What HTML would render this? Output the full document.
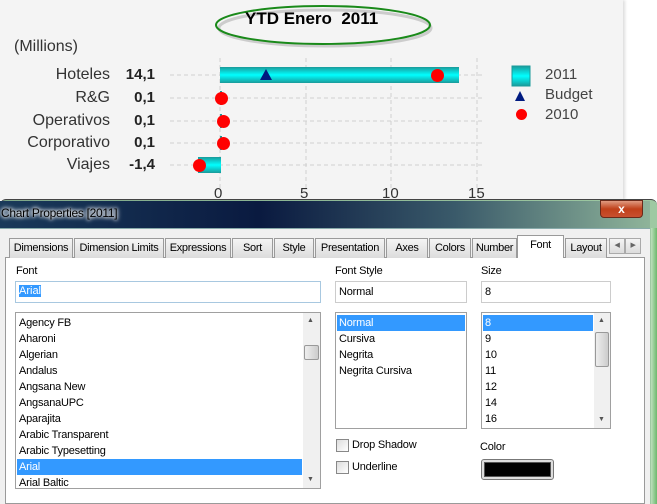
<!DOCTYPE html>
<html><head><style>
*{margin:0;padding:0;box-sizing:border-box}
body{width:657px;height:504px;overflow:hidden;background:#fff;font-family:"Liberation Sans",sans-serif;position:relative}
.a{position:absolute}
.lbl{font-size:16px;color:#333;text-align:right;width:110px;left:0}
.val{font-size:15px;font-weight:bold;color:#222;text-align:right;width:40px;left:115px}
.dot{width:13px;height:13px;border-radius:50%;background:#f00}
.tab{position:absolute;top:238px;height:20px;border:1px solid #9a9a9a;border-bottom:none;background:linear-gradient(#f4f4f4,#dcdcdc);font-size:11px;letter-spacing:-0.3px;text-align:center;line-height:18px;color:#000}
.d{font-size:11px;color:#000;letter-spacing:-0.2px}
.box{position:absolute;border:1px solid #a0a0a0;background:#fff}
.it{position:absolute;left:3px;font-size:11px;letter-spacing:-0.2px;height:16px;line-height:16px}
</style></head><body>
<div class="a" style="left:0;top:0;width:623px;height:200px;background:#f4f4f4;box-shadow:2px 0 3px #ddd"></div>
<svg class="a" style="left:0;top:0" width="657" height="200">
<ellipse cx="325" cy="28" rx="106" ry="18" fill="none" stroke="#ccc" stroke-width="3"/>
<ellipse cx="323" cy="25" rx="107" ry="19" fill="none" stroke="#1a8a1a" stroke-width="2"/>
<g stroke="#d0d0d0" stroke-dasharray="4,3" stroke-width="1">
<line x1="220" y1="58" x2="220" y2="190"/><line x1="306" y1="58" x2="306" y2="190"/><line x1="391" y1="58" x2="391" y2="190"/><line x1="477" y1="58" x2="477" y2="190"/>
<line x1="170" y1="75" x2="485" y2="75"/><line x1="170" y1="98" x2="485" y2="98"/><line x1="170" y1="121" x2="485" y2="121"/><line x1="170" y1="143" x2="485" y2="143"/><line x1="170" y1="165" x2="485" y2="165"/>
</g>
<defs><linearGradient id="g" x1="0" y1="0" x2="0" y2="1"><stop offset="0" stop-color="#1a9a9a"/><stop offset=".5" stop-color="#00ffff"/><stop offset="1" stop-color="#1a9a9a"/></linearGradient></defs>
<rect x="220" y="67" width="239" height="16" fill="url(#g)"/>
<rect x="220" y="91" width="2" height="14" fill="#1a9a9a"/>
<rect x="220" y="114" width="2" height="14" fill="#1a9a9a"/>
<rect x="220" y="136" width="2" height="14" fill="#1a9a9a"/>
<rect x="198" y="157" width="23" height="16" fill="url(#g)"/>
<polygon points="266,69 272,80 260,80" fill="#001a80"/>
<rect x="512" y="66" width="18" height="20" fill="url(#g)" stroke="#1a9a9a"/>
<polygon points="520,91 525,101 515,101" fill="#001a80"/>
</svg>
<div class="a" style="left:245px;top:9px;font-size:17px;font-weight:bold">YTD Enero&nbsp; 2011</div>
<div class="a" style="left:14px;top:38px;font-size:16px;color:#333">(Millions)</div>
<div class="a lbl" style="top:66px">Hoteles</div><div class="a val" style="top:66px">14,1</div>
<div class="a lbl" style="top:89px">R&amp;G</div><div class="a val" style="top:89px">0,1</div>
<div class="a lbl" style="top:112px">Operativos</div><div class="a val" style="top:112px">0,1</div>
<div class="a lbl" style="top:134px">Corporativo</div><div class="a val" style="top:134px">0,1</div>
<div class="a lbl" style="top:156px">Viajes</div><div class="a val" style="top:156px">-1,4</div>
<div class="a dot" style="left:431px;top:69px"></div>
<div class="a dot" style="left:215px;top:92px"></div>
<div class="a dot" style="left:217px;top:115px"></div>
<div class="a dot" style="left:217px;top:137px"></div>
<div class="a dot" style="left:193px;top:159px"></div>
<div class="a" style="left:545px;top:66px;font-size:15px;color:#444">2011</div>
<div class="a" style="left:545px;top:86px;font-size:15px;color:#444">Budget</div>
<div class="a" style="left:545px;top:106px;font-size:15px;color:#444">2010</div>
<div class="a dot" style="left:516px;top:109px;width:11px;height:11px"></div>
<div class="a" style="left:214px;top:185px;font-size:15px;color:#333">0</div>
<div class="a" style="left:300px;top:185px;font-size:15px;color:#333">5</div>
<div class="a" style="left:382px;top:185px;font-size:15px;color:#333">10</div>
<div class="a" style="left:468px;top:185px;font-size:15px;color:#333">15</div>
<!-- dialog -->
<div class="a" style="left:0;top:199px;width:657px;height:305px;background:linear-gradient(90deg,#7fa88a,#9ec9a2);border-radius:6px 6px 0 0;border-top:1px solid #444"></div>
<div class="a" style="left:0;top:201px;width:650px;height:27px;background:linear-gradient(90deg,#1a3a5a,#0a1a40 40%,#3a5a6a 70%,#8fb49a)"></div>
<div class="a" style="left:1px;top:206px;font-size:12px;letter-spacing:-0.3px;color:#000;text-shadow:0 0 6px #fff,0 0 4px #fff,0 0 3px #fff">Chart Properties [2011]</div>
<div class="a" style="left:600px;top:200px;width:43px;height:18px;border-radius:0 0 4px 4px;background:linear-gradient(#e09a80,#c0401a 50%,#c85030);border:1px solid #6a2a1a;color:#fff;font-weight:bold;font-size:12px;text-align:center;line-height:16px">x</div>
<div class="a" style="left:0;top:228px;width:650px;height:276px;background:#f0f0f0;border-top:1px solid #8aa"></div>
<div class="a" style="left:5px;top:257px;width:640px;height:247px;background:#fff;border:1px solid #9a9a9a"></div>
<div class="tab" style="left:9px;width:64px">Dimensions</div>
<div class="tab" style="left:74px;width:90px">Dimension Limits</div>
<div class="tab" style="left:165px;width:66px">Expressions</div>
<div class="tab" style="left:232px;width:41px">Sort</div>
<div class="tab" style="left:274px;width:40px">Style</div>
<div class="tab" style="left:315px;width:70px">Presentation</div>
<div class="tab" style="left:386px;width:42px">Axes</div>
<div class="tab" style="left:429px;width:42px">Colors</div>
<div class="tab" style="left:472px;width:45px">Number</div>
<div class="tab" style="left:517px;top:235px;height:23px;width:47px;background:#fff;line-height:18px">Font</div>
<div class="tab" style="left:565px;width:42px">Layout</div>
<div class="tab" style="left:609px;width:16px;top:238px;height:16px;border:1px solid #aaa;font-size:7px;line-height:14px;color:#666">◀</div>
<div class="tab" style="left:625px;width:16px;top:238px;height:16px;border:1px solid #aaa;font-size:7px;line-height:14px;color:#666">▶</div>
<div class="a" style="left:651px;top:228px;width:6px;height:276px;background:linear-gradient(90deg,#bde0bd,#6cb86c)"></div>
<div class="a d" style="left:16px;top:265px">Font</div>
<div class="box" style="left:15px;top:281px;width:306px;height:22px;border-color:#a8c8e0"><span style="position:absolute;left:3px;top:3px;background:#3399ff;color:#fff;font-size:11px">Arial</span></div>
<div class="box" style="left:15px;top:312px;width:306px;height:177px">
<div class="it" style="top:2px">Agency FB</div><div class="it" style="top:18px">Aharoni</div><div class="it" style="top:34px">Algerian</div><div class="it" style="top:50px">Andalus</div><div class="it" style="top:66px">Angsana New</div><div class="it" style="top:82px">AngsanaUPC</div><div class="it" style="top:98px">Aparajita</div><div class="it" style="top:114px">Arabic Transparent</div><div class="it" style="top:130px">Arabic Typesetting</div>
<div class="it" style="top:146px;left:1px;width:285px;padding-left:2px;background:#3399ff;color:#fff">Arial</div><div class="it" style="top:162px">Arial Baltic</div>
<div class="a" style="left:287px;top:0;width:17px;height:175px;background:#f0f0f0"></div>
<div class="a" style="left:288px;top:32px;width:15px;height:15px;border:1px solid #999;border-radius:2px;background:linear-gradient(90deg,#eee,#ccc)"></div>
<div class="a" style="left:291px;top:4px;font-size:7px;color:#555">▲</div><div class="a" style="left:291px;top:163px;font-size:7px;color:#555">▼</div>
</div>
<div class="a d" style="left:335px;top:265px">Font Style</div>
<div class="box" style="left:335px;top:281px;width:132px;height:22px;border-color:#ccc"><span class="it" style="top:2px">Normal</span></div>
<div class="box" style="left:335px;top:312px;width:132px;height:117px">
<div class="it" style="top:2px;left:1px;width:128px;padding-left:2px;background:#3399ff;color:#fff">Normal</div><div class="it" style="top:18px">Cursiva</div><div class="it" style="top:34px">Negrita</div><div class="it" style="top:50px">Negrita Cursiva</div></div>
<div class="a d" style="left:481px;top:265px">Size</div>
<div class="box" style="left:481px;top:281px;width:130px;height:22px;border-color:#ccc"><span class="it" style="top:2px">8</span></div>
<div class="box" style="left:481px;top:312px;width:130px;height:117px">
<div class="it" style="top:2px;left:1px;width:110px;padding-left:2px;background:#3399ff;color:#fff">8</div><div class="it" style="top:18px">9</div><div class="it" style="top:34px">10</div><div class="it" style="top:50px">11</div><div class="it" style="top:66px">12</div><div class="it" style="top:82px">14</div><div class="it" style="top:98px">16</div>
<div class="a" style="left:112px;top:0;width:16px;height:115px;background:#f0f0f0"></div>
<div class="a" style="left:113px;top:19px;width:14px;height:35px;border:1px solid #999;border-radius:2px;background:linear-gradient(90deg,#eee,#ccc)"></div>
<div class="a" style="left:116px;top:4px;font-size:7px;color:#555">▲</div><div class="a" style="left:116px;top:103px;font-size:7px;color:#555">▼</div>
</div>
<div class="a" style="left:336px;top:439px;width:13px;height:13px;border:1px solid #888;background:linear-gradient(135deg,#ddd,#fff)"></div>
<div class="a d" style="left:352px;top:439px">Drop Shadow</div>
<div class="a" style="left:336px;top:461px;width:13px;height:13px;border:1px solid #888;background:linear-gradient(135deg,#ddd,#fff)"></div>
<div class="a d" style="left:352px;top:461px">Underline</div>
<div class="a d" style="left:480px;top:441px">Color</div>
<div class="a" style="left:481px;top:459px;width:73px;height:21px;border:1px solid #777;border-radius:3px;background:#ddd;padding:2px"><div style="width:100%;height:100%;background:#000;border:1px solid #555"></div></div>
</body></html>
